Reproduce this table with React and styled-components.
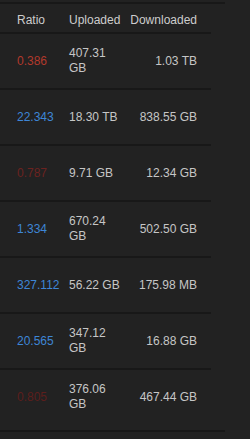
import React from "react";
import styled, { createGlobalStyle } from "styled-components";

const Global = createGlobalStyle`
  html, body { margin: 0; padding: 0; background: #222222; }
  body { font-family: "Liberation Sans", Arial, sans-serif; }
`;

const Page = styled.div`
  padding-top: 2px;
  width: 250px;
  height: 437px;
  background: #222222;
`;

const Panel = styled.div`
  width: 225px;
  border-top: 2px solid #181818;
  border-bottom: 2px solid #181818;
  padding-bottom: 6px;
`;

const Table = styled.div`
  width: 211px;
  display: grid;
  grid-template-columns: 69px 53px 1fr;
`;

const Row = styled.div`
  display: contents;
`;

const Cell = styled.div`
  height: ${(p) => (p.$head ? "28px" : "54px")};
  display: flex;
  align-items: ${(p) => (p.$head ? "flex-end" : "center")};
  justify-content: ${(p) => (p.$right ? "flex-end" : "flex-start")};
  padding-left: ${(p) => (p.$first ? "17px" : "0")};
  padding-right: ${(p) => (p.$right ? "14px" : "0")};
  padding-bottom: ${(p) => (p.$head ? "4px" : "0")};
  box-sizing: content-box;
  border-bottom: ${(p) => (p.$last ? "none" : "2px solid #181818")};
  font-size: 12px;
  line-height: 15px;
  color: ${(p) => p.$color || (p.$head ? "#cdcdcd" : "#c6c6c6")};
  text-align: ${(p) => (p.$right ? "right" : "left")};
`;

const HeadCell = styled(Cell).attrs({ $head: true })`
  height: 24px;
`;

const rows = [
  ["0.386", "407.31 GB", "1.03 TB"],
  ["22.343", "18.30 TB", "838.55 GB"],
  ["0.787", "9.71 GB", "12.34 GB"],
  ["1.334", "670.24 GB", "502.50 GB"],
  ["327.112", "56.22 GB", "175.98 MB"],
  ["20.565", "347.12 GB", "16.88 GB"],
  ["0.805", "376.06 GB", "467.44 GB"],
];

function ratioColor(r) {
  const v = parseFloat(r);
  if (v >= 1) return "#3e86d6";
  if (v < 0.5) return "#b2392c";
  if (v < 0.8) return "#6c2220";
  return "#5c1e1c";
}

export default function App() {
  return (
    <Page>
      <Global />
      <Panel>
        <Table>
          <Row>
            <HeadCell $first>Ratio</HeadCell>
            <HeadCell>Uploaded</HeadCell>
            <HeadCell $right>Downloaded</HeadCell>
          </Row>
          {rows.map((r, i) => {
            const last = i === rows.length - 1;
            return (
              <Row key={i}>
                <Cell $first $last={last} $color={ratioColor(r[0])}>
                  {r[0]}
                </Cell>
                <Cell $last={last}>{r[1]}</Cell>
                <Cell $right $last={last}>
                  {r[2]}
                </Cell>
              </Row>
            );
          })}
        </Table>
      </Panel>
    </Page>
  );
}
